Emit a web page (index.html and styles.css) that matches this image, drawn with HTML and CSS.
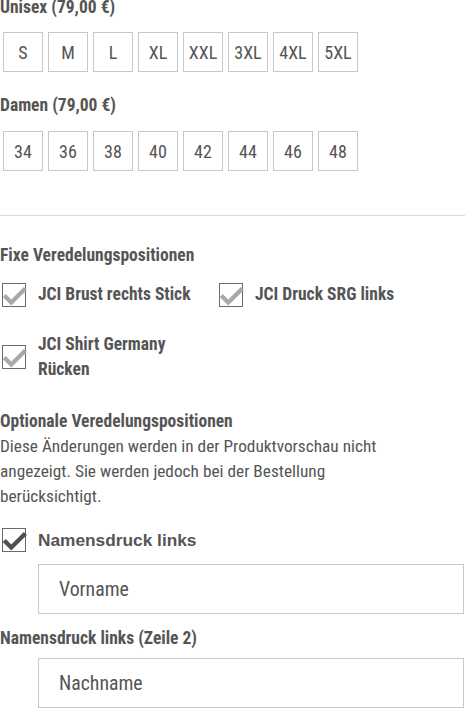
FILE: index.html
```html
<!DOCTYPE html>
<html lang="de">
<head>
<meta charset="utf-8">
<link rel="stylesheet" href="styles.css">
</head>
<body>
<div class="page">
  <section class="group">
    <div class="group-title">Unisex (79,00 €)</div>
    <div class="sizes">
      <button class="size">S</button>
      <button class="size">M</button>
      <button class="size">L</button>
      <button class="size">XL</button>
      <button class="size">XXL</button>
      <button class="size">3XL</button>
      <button class="size">4XL</button>
      <button class="size">5XL</button>
    </div>
  </section>
  <section class="group group-second">
    <div class="group-title">Damen (79,00 €)</div>
    <div class="sizes">
      <button class="size">34</button>
      <button class="size">36</button>
      <button class="size">38</button>
      <button class="size">40</button>
      <button class="size">42</button>
      <button class="size">44</button>
      <button class="size">46</button>
      <button class="size">48</button>
    </div>
  </section>

  <hr class="divider">

  <section class="fixed">
    <div class="section-title">Fixe Veredelungspositionen</div>
    <div class="check-grid">
      <div class="check">
        <span class="box"><svg viewBox="0 0 24 24" class="tick"><path d="M3 11.5 L9.5 18 L22.5 5"/></svg></span>
        <span class="check-label">JCI Brust rechts Stick</span>
      </div>
      <div class="check">
        <span class="box"><svg viewBox="0 0 24 24" class="tick"><path d="M3 11.5 L9.5 18 L22.5 5"/></svg></span>
        <span class="check-label">JCI Druck SRG links</span>
      </div>
      <div class="check">
        <span class="box"><svg viewBox="0 0 24 24" class="tick"><path d="M3 11.5 L9.5 18 L22.5 5"/></svg></span>
        <span class="check-label">JCI Shirt Germany Rücken</span>
      </div>
    </div>
  </section>

  <section class="optional">
    <div class="section-title">Optionale Veredelungspositionen</div>
    <p class="note">Diese Änderungen werden in der Produktvorschau nicht angezeigt. Sie werden jedoch bei der Bestellung berücksichtigt.</p>

    <div class="check check-active">
      <span class="box"><svg viewBox="0 0 24 24" class="tick"><path d="M3 11.5 L9.5 18 L22.5 5"/></svg></span>
      <span class="active-label">Namensdruck links</span>
    </div>
    <input class="field" type="text" placeholder="Vorname">

    <div class="section-title field-title">Namensdruck links (Zeile 2)</div>
    <input class="field" type="text" placeholder="Nachname">
  </section>
</div>
</body>
</html>
```

FILE: styles.css
```css
* { box-sizing: border-box; }

html, body {
  margin: 0;
  padding: 0;
  background: #fff;
}

body {
  font-family: "Roboto Condensed", Roboto, sans-serif;
  font-stretch: condensed;
  font-size: 18px;
  color: #555;
  overflow: hidden;
}

.page {
  margin-top: -5px;
}

.group-title,
.section-title {
  font-weight: bold;
  font-size: 17.5px;
  line-height: 25px;
}

.sizes {
  display: flex;
  gap: 5px;
  padding-left: 3px;
  margin-top: 12px;
}

.group-second .sizes {
  margin-top: 13px;
}

.size {
  width: 40px;
  height: 40px;
  padding: 0;
  border: 1px solid #c8c8c8;
  background: #fff;
  color: #555;
  font-family: inherit;
  font-stretch: condensed;
  font-size: 18px;
  display: flex;
  align-items: center;
  justify-content: center;
}

.group-second {
  margin-top: 21px;
}

.divider {
  border: 0;
  border-top: 1px solid #d9d9d9;
  margin: 44px 0 0;
}

.fixed {
  margin-top: 27px;
}

.check-grid {
  display: grid;
  grid-template-columns: 217px 1fr;
  row-gap: 25px;
  padding-left: 2px;
  margin-top: 14px;
}

.check {
  display: flex;
  align-items: center;
  gap: 12px;
}

.box {
  position: relative;
  flex: none;
  width: 24px;
  height: 24px;
  border: 1.5px solid #6a6a6a;
  background: #fff;
}

.tick {
  position: absolute;
  left: -2px;
  top: -1px;
  width: 26px;
  height: 26px;
  fill: none;
  stroke: #a9a9a9;
  stroke-width: 4;
}

.check-label {
  font-weight: bold;
  font-size: 17.5px;
  line-height: 25px;
  max-width: 165px;
}

.optional {
  margin-top: 27px;
}

.note {
  margin: 0;
  max-width: 400px;
  font-size: 17.3px;
  line-height: 25px;
}

.check-active {
  margin-top: 19px;
  padding-left: 2px;
}

.check-active .tick {
  stroke: #505050;
}

.active-label {
  font-family: "Liberation Sans", Arial, sans-serif;
  font-stretch: normal;
  font-weight: bold;
  font-size: 17.3px;
  line-height: 24px;
}

.field {
  display: block;
  width: 426px;
  height: 50px;
  margin: 12px 0 0 38px;
  padding: 0 20px;
  border: 1px solid #c8c8c8;
  background: #fff;
  font-family: inherit;
  font-stretch: condensed;
  font-size: 19.8px;
  color: #555;
  outline: none;
}

.field::placeholder {
  color: #555;
  opacity: 1;
}

.field-title {
  margin-top: 12px;
}

.field-title + .field {
  margin-top: 7px;
}
```
